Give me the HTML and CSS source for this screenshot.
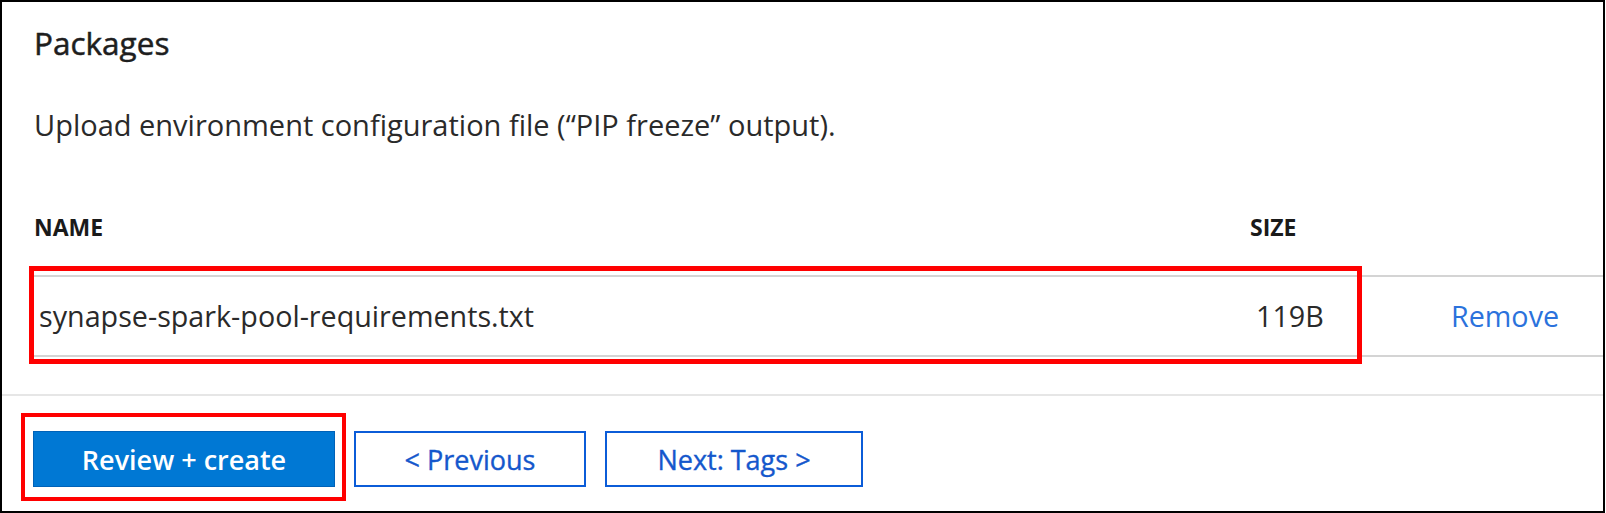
FILE: index.html
```html
<!DOCTYPE html>
<html lang="en">
<head>
<meta charset="utf-8">
<title>Packages</title>
<link rel="stylesheet" href="styles.css">
</head>
<body>
<div class="frame">
  <h2 class="title">Packages</h2>
  <p class="desc">Upload environment configuration file (“PIP freeze” output).</p>
  <div class="thead">
    <div class="th">NAME</div>
    <div class="th">SIZE</div>
    <div class="th"></div>
  </div>
  <div class="row">
    <div class="cell">synapse-spark-pool-requirements.txt</div>
    <div class="cell">119B</div>
    <div class="cell"><a class="link" href="#">Remove</a></div>
  </div>
  <div class="footer">
    <span class="mark">
      <button class="btn btn-primary">Review + create</button>
    </span>
    <button class="btn btn-outline btn-prev">&lt; Previous</button>
    <button class="btn btn-outline btn-next">Next: Tags &gt;</button>
  </div>
</div>
</body>
</html>
```
FILE: styles.css
```css
*, *::before, *::after { box-sizing: border-box; }
html, body { margin: 0; padding: 0; background: #fff; }
body { font-family: "Open Sans", "Noto Sans", sans-serif; color: #262626; }

.frame {
  width: 1605px;
  height: 513px;
  border: 2px solid #000;
  background: #fff;
  overflow: hidden;
}

.title {
  margin: 0;
  padding: 21px 0 0 32px;
  font-size: 31.5px;
  line-height: 40px;
  font-weight: 400;
  -webkit-text-stroke: 0.5px #1e1e1e;
  color: #1e1e1e;
}

.desc {
  margin: 42px 0 0 0;
  padding-left: 32px;
  font-size: 29px;
  line-height: 40px;
  color: #2a2a2a;
}

.thead {
  margin-top: 67px;
  padding-left: 32px;
  display: grid;
  grid-template-columns: 1216px 200px 1fr;
  font-size: 23px;
  line-height: 30px;
  font-weight: 700;
  color: #1a1a1a;
}

.row {
  position: relative;
  margin: 33px 0 0 29px;
  border-top: 2px solid #d4d4d4;
  border-bottom: 2px solid #d4d4d4;
  padding-left: 8px;
  display: grid;
  grid-template-columns: 1217px 195px 1fr;
  font-size: 28.7px;
  line-height: 78px;
  color: #2a2a2a;
}
.row::after {
  content: "";
  position: absolute;
  left: -2px;
  top: -11px;
  width: 1333px;
  height: 98px;
  border: 5px solid #ff0000;
  pointer-events: none;
}

.link {
  color: #2b72dc;
  text-decoration: none;
}

.footer {
  margin-top: 37px;
  border-top: 2px solid #e6e6e6;
  padding: 35px 0 0 31px;
  display: flex;
  gap: 19px;
  align-items: flex-start;
}

.mark {
  position: relative;
  display: flex;
}
.mark::after {
  content: "";
  position: absolute;
  left: -12px;
  top: -18px;
  width: 325px;
  height: 88px;
  border: 4.5px solid #ff0000;
  pointer-events: none;
}

.btn {
  height: 56px;
  font-family: "Open Sans", "Noto Sans", sans-serif;
  font-size: 27px;
  line-height: 1;
  cursor: pointer;
  display: flex;
  align-items: center;
  justify-content: center;
  padding: 0;
}
.btn-primary {
  width: 302px;
  background: #0078d4;
  border: 1px solid #0062b8;
  color: #fff;
  font-weight: 600;
}
.btn-outline {
  background: #fff;
  border: 2px solid #0b5cd8;
  color: #1457cc;
  font-weight: 400;
  -webkit-text-stroke: 0.35px #1457cc;
}
.btn-prev { width: 232px; }
.btn-next { width: 258px; }
```
